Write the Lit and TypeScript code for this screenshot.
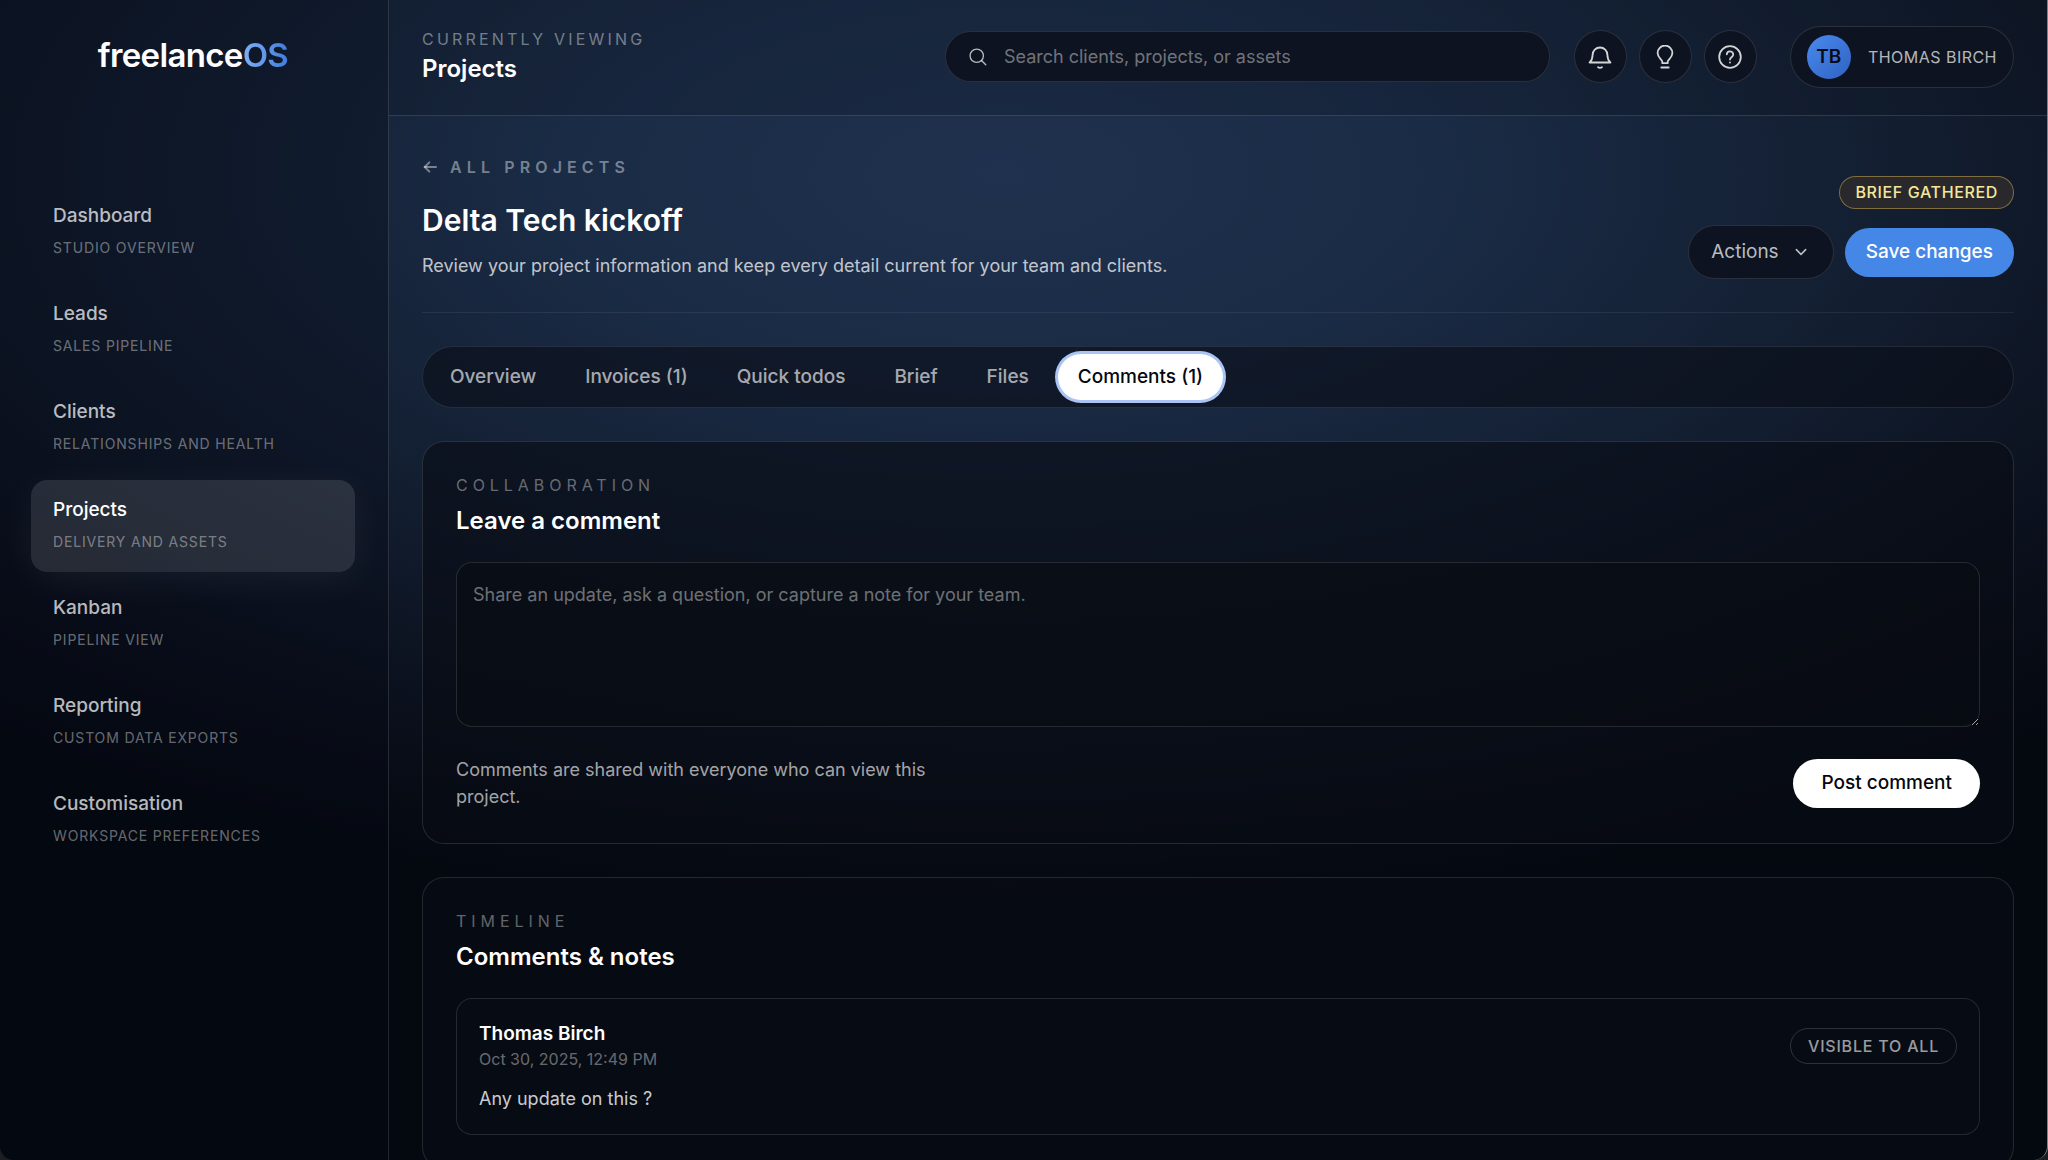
import { LitElement, html, css, svg, nothing } from "lit";
import { customElement, state } from "lit/decorators.js";
import { classMap } from "lit/directives/class-map.js";

interface NavItem {
  label: string;
  hint: string;
}

const NAV: NavItem[] = [
  { label: "Dashboard", hint: "Studio overview" },
  { label: "Leads", hint: "Sales pipeline" },
  { label: "Clients", hint: "Relationships and health" },
  { label: "Projects", hint: "Delivery and assets" },
  { label: "Kanban", hint: "Pipeline view" },
  { label: "Reporting", hint: "Custom data exports" },
  { label: "Customisation", hint: "Workspace preferences" },
];

const TABS = ["Overview", "Invoices (1)", "Quick todos", "Brief", "Files", "Comments (1)"];

const icon = (size: number, width: number, body: unknown) => html`<svg
  width=${size}
  height=${size}
  viewBox="0 0 24 24"
  fill="none"
  stroke="currentColor"
  stroke-width=${width}
  stroke-linecap="round"
  stroke-linejoin="round"
  aria-hidden="true"
>
  ${body}
</svg>`;

const ICONS = {
  search: svg`<circle cx="10.500" cy="10.500" r="8"/><path d="m16.500 16.500 4.800 4.800"/>`,
  bell: svg`<path d="M1.600 17.500c1.900-1.900 3-4 3-7.600a7.400 7.400 0 0 1 14.800 0c0 3.600 1.100 5.700 3 7.600z"/><path d="M10 22.200c.9.9 3.100.9 4 0"/>`,
  bulb: svg`<path d="M9.300 18.200v-1.500c0-2.200-4.700-3.900-4.700-8.700a7.400 7.400 0 0 1 14.800 0c0 4.800-4.700 6.500-4.700 8.700v1.500z"/><path d="M8.300 22.500h7.400"/>`,
  help: svg`<circle cx="12" cy="12" r="10.800"/><path d="M8.800 9.300a3.200 3.200 0 0 1 6.400.4c0 2.300-3.200 2.700-3.200 4.700"/><path d="M12 17.400v.1"/>`,
  arrow: svg`<path d="M21 12H4"/><path d="m11 5-7 7 7 7"/>`,
  chevron: svg`<path d="m5 8.500 7 7 7-7"/>`,
};

@customElement("app-root")
export class AppRoot extends LitElement {
  @state() private section = "Projects";
  @state() private tab = "Comments (1)";

  static styles = css`
    :host {
      display: block;
      background: #1c1e22;
      color: #fff;
      font-family: Inter, "Liberation Sans", sans-serif;
      font-size: 18px;
      line-height: 26px;
    }
    *,
    *::before,
    *::after {
      box-sizing: border-box;
    }
    h1,
    h2,
    p {
      margin: 0;
    }
    a {
      color: inherit;
      text-decoration: none;
    }
    button,
    input,
    textarea {
      font: inherit;
      color: inherit;
    }
    button {
      border: 0;
      cursor: pointer;
    }
    svg {
      display: block;
      flex: none;
    }
    .shell {
      display: flex;
      height: 100vh;
      overflow: hidden;
      border-right: 1px solid #7d8288;
      border-radius: 0 0 14px 14px;
      background:
        radial-gradient(
          78% 64% at 49% 15%,
          rgb(31, 49, 78),
          rgb(26, 43, 69) 28%,
          rgb(18, 29, 47) 58%,
          rgb(10, 15, 27) 82%,
          rgb(4, 8, 15)
        );
    }
    .sidebar {
      display: flex;
      flex-direction: column;
      flex: none;
      width: 389px;
      padding: 33px 33px 32px 31px;
      border-right: 1px solid rgba(255, 255, 255, 0.13);
      background: rgba(6, 8, 20, 0.34);
    }
    .logo {
      align-self: center;
      font-size: 33px;
      line-height: 44px;
      font-weight: 600;
      letter-spacing: -0.02em;
    }
    .logo-mark {
      background: linear-gradient(90deg, #7fb0f5, #3f7de0);
      background-clip: text;
      -webkit-background-clip: text;
      color: transparent;
    }
    .nav {
      display: flex;
      flex-direction: column;
      gap: 6px;
      margin-top: 109px;
    }
    .nav-item {
      display: flex;
      flex-direction: column;
      gap: 8px;
      height: 92px;
      padding: 17px 22px;
      border-radius: 16px;
      color: rgba(255, 255, 255, 0.72);
    }
    .nav-label {
      font-size: 19px;
      line-height: 26px;
      font-weight: 500;
    }
    .nav-hint {
      font-size: 14px;
      line-height: 22px;
      letter-spacing: 0.06em;
      text-transform: uppercase;
      color: rgba(255, 255, 255, 0.4);
    }
    .nav-item.active {
      background: rgba(255, 255, 255, 0.12);
      box-shadow: 0 8px 40px rgba(255, 255, 255, 0.06);
      color: #fff;
    }
    .main {
      display: flex;
      flex-direction: column;
      flex: 1;
      min-width: 0;
    }
    .topbar {
      display: flex;
      align-items: center;
      flex: none;
      height: 116px;
      padding: 0 33px 2px;
      border-bottom: 1px solid rgba(255, 255, 255, 0.13);
      background: rgba(8, 14, 24, 0.2);
    }
    .eyebrow {
      font-size: 16px;
      line-height: 24px;
      letter-spacing: 0.2em;
      text-transform: uppercase;
      color: rgba(255, 255, 255, 0.42);
    }
    .crumb-title {
      margin-top: 1px;
      font-size: 24px;
      line-height: 34px;
      font-weight: 600;
    }
    .pill {
      border: 1px solid rgba(255, 255, 255, 0.12);
      border-radius: 999px;
      background: #0d1320;
    }
    .search {
      display: flex;
      align-items: center;
      gap: 16px;
      width: 38%;
      height: 51px;
      margin-left: auto;
      padding: 0 22px;
      color: rgba(255, 255, 255, 0.7);
    }
    .search-input {
      flex: 1;
      min-width: 0;
      padding: 0;
      border: 0;
      outline: 0;
      background: none;
    }
    .search-input::placeholder,
    .note-input::placeholder {
      color: rgba(255, 255, 255, 0.42);
      opacity: 1;
    }
    .tools {
      display: flex;
      gap: 12px;
      margin: 0 33px 0 24px;
    }
    .tool {
      display: grid;
      place-items: center;
      width: 53px;
      height: 53px;
      padding: 0;
      color: rgba(255, 255, 255, 0.82);
    }
    .user {
      display: flex;
      align-items: center;
      gap: 17px;
      height: 62px;
      padding: 0 16px;
      font-size: 16px;
      letter-spacing: 0.03em;
      text-transform: uppercase;
      color: rgba(255, 255, 255, 0.7);
    }
    .avatar {
      display: grid;
      place-items: center;
      width: 44px;
      height: 44px;
      border-radius: 50%;
      background: linear-gradient(135deg, #4a8af0, #2f62c0);
      color: #060c18;
      font-size: 19px;
      font-weight: 600;
      letter-spacing: 0;
    }
    .content {
      display: flex;
      flex-direction: column;
      padding: 38px 33px 0;
    }
    .page-head {
      display: flex;
      align-items: flex-end;
      justify-content: space-between;
      padding-bottom: 33px;
      border-bottom: 1px solid rgba(255, 255, 255, 0.07);
    }
    .back {
      display: inline-flex;
      align-items: center;
      gap: 12px;
      font-size: 16px;
      line-height: 26px;
      font-weight: 600;
      letter-spacing: 0.32em;
      text-transform: uppercase;
      color: rgba(255, 255, 255, 0.42);
    }
    .title {
      margin-top: 18px;
      font-size: 30px;
      line-height: 40px;
      font-weight: 600;
    }
    .subtitle {
      margin-top: 13px;
      color: rgba(255, 255, 255, 0.74);
    }
    .head-side {
      display: flex;
      flex-direction: column;
      align-items: flex-end;
      gap: 16px;
    }
    .status {
      padding: 3px 15px;
      border: 1px solid rgba(216, 180, 84, 0.5);
      border-radius: 999px;
      background: #29292d;
      color: #f4e79a;
      font-size: 16px;
      line-height: 25px;
      font-weight: 500;
      letter-spacing: 0.04em;
      text-transform: uppercase;
    }
    .actions {
      display: flex;
      align-items: center;
      gap: 11px;
    }
    .menu {
      display: flex;
      align-items: center;
      gap: 14px;
      height: 54px;
      padding: 0 24px 0 22px;
      font-size: 19px;
      color: rgba(255, 255, 255, 0.72);
    }
    .save,
    .post {
      height: 49px;
      border-radius: 999px;
      font-size: 19px;
      font-weight: 500;
    }
    .save {
      padding: 0 21px;
      background: #4587e6;
      color: #fff;
    }
    .post {
      padding: 0 28px;
      background: #fff;
      color: #04070f;
    }
    .tabs {
      display: flex;
      gap: 9px;
      margin-top: 33px;
      padding: 7px;
      border: 1px solid rgba(255, 255, 255, 0.1);
      border-radius: 999px;
      background: rgba(10, 13, 24, 0.6);
    }
    .tab {
      height: 46px;
      padding: 0 20px;
      border-radius: 999px;
      background: none;
      font-size: 19px;
      font-weight: 500;
      color: rgba(255, 255, 255, 0.65);
    }
    .tab.active {
      background: #fff;
      box-shadow: 0 0 0 3px #aac4f3;
      color: #04070f;
    }
    .card {
      margin-top: 33px;
      padding: 31px 33px 33px;
      border: 1px solid rgba(255, 255, 255, 0.12);
      border-radius: 22px;
      background: rgba(8, 11, 20, 0.6);
    }
    .card .eyebrow {
      letter-spacing: 0.31em;
      color: rgba(255, 255, 255, 0.38);
    }
    .card-title {
      margin-top: 7px;
      font-size: 24px;
      line-height: 34px;
      font-weight: 600;
    }
    .note-input {
      display: block;
      width: 100%;
      height: 165px;
      margin-top: 24px;
      padding: 19px 16px;
      border: 1px solid rgba(255, 255, 255, 0.12);
      border-radius: 16px;
      outline: 0;
      background: rgba(8, 12, 19, 0.6);
      resize: vertical;
      color-scheme: dark;
    }
    .form-foot {
      display: flex;
      align-items: center;
      justify-content: space-between;
      margin-top: 29px;
    }
    .form-note {
      max-width: 500px;
      line-height: 27px;
      color: rgba(255, 255, 255, 0.64);
    }
    .comment {
      margin-top: 24px;
      padding: 22px;
      border: 1px solid rgba(255, 255, 255, 0.12);
      border-radius: 16px;
      background: rgba(8, 12, 20, 0.6);
    }
    .comment-head {
      display: flex;
      align-items: center;
      justify-content: space-between;
    }
    .author {
      font-size: 19px;
      font-weight: 600;
    }
    .date {
      font-size: 16px;
      line-height: 24px;
      color: rgba(255, 255, 255, 0.4);
    }
    .comment-body {
      margin-top: 15px;
      color: rgba(255, 255, 255, 0.8);
    }
    .visibility {
      padding: 4px 17px;
      border: 1px solid rgba(255, 255, 255, 0.16);
      border-radius: 999px;
      font-size: 16px;
      font-weight: 500;
      letter-spacing: 0.05em;
      text-transform: uppercase;
      color: rgba(255, 255, 255, 0.6);
    }
  `;

  private renderSidebar() {
    return html`<aside class="sidebar">
      <a class="logo" href="#home">freelance<span class="logo-mark">OS</span></a>
      <nav class="nav" aria-label="Main">
        ${NAV.map(
          (item) => html`<a
            class=${classMap({ "nav-item": true, active: item.label === this.section })}
            href="#${item.label.toLowerCase()}"
            aria-current=${item.label === this.section ? "page" : nothing}
            @click=${() => (this.section = item.label)}
          >
            <span class="nav-label">${item.label}</span>
            <span class="nav-hint">${item.hint}</span>
          </a>`,
        )}
      </nav>
    </aside>`;
  }

  private renderTopbar() {
    return html`<header class="topbar">
      <div>
        <p class="eyebrow">Currently viewing</p>
        <p class="crumb-title">${this.section}</p>
      </div>
      <label class="search pill">
        ${icon(20, 1.6, ICONS.search)}
        <input
          class="search-input"
          type="search"
          aria-label="Search"
          placeholder="Search clients, projects, or assets"
        />
      </label>
      <div class="tools">
        <button class="tool pill" aria-label="Notifications">${icon(24, 1.8, ICONS.bell)}</button>
        <button class="tool pill" aria-label="Tips">${icon(24, 1.8, ICONS.bulb)}</button>
        <button class="tool pill" aria-label="Help">${icon(24, 1.8, ICONS.help)}</button>
      </div>
      <button class="user pill"><span class="avatar">TB</span><span>Thomas Birch</span></button>
    </header>`;
  }

  private renderPageHead() {
    return html`<div class="page-head">
      <div>
        <a class="back" href="#projects">${icon(16, 3, ICONS.arrow)}<span>All projects</span></a>
        <h1 class="title">Delta Tech kickoff</h1>
        <p class="subtitle">
          Review your project information and keep every detail current for your team and clients.
        </p>
      </div>
      <div class="head-side">
        <span class="status">Brief gathered</span>
        <div class="actions">
          <button class="menu pill" aria-haspopup="menu">
            <span>Actions</span>${icon(16, 2.4, ICONS.chevron)}
          </button>
          <button class="save">Save changes</button>
        </div>
      </div>
    </div>`;
  }

  render() {
    return html`<div class="shell">
      ${this.renderSidebar()}
      <div class="main">
        ${this.renderTopbar()}
        <main class="content">
          ${this.renderPageHead()}
          <div class="tabs" role="tablist">
            ${TABS.map(
              (name) => html`<button
                role="tab"
                class=${classMap({ tab: true, active: name === this.tab })}
                aria-selected=${name === this.tab ? "true" : "false"}
                @click=${() => (this.tab = name)}
              >
                ${name}
              </button>`,
            )}
          </div>
          <section class="card">
            <p class="eyebrow">Collaboration</p>
            <h2 class="card-title"><label for="note">Leave a comment</label></h2>
            <textarea
              class="note-input"
              id="note"
              placeholder="Share an update, ask a question, or capture a note for your team."
            ></textarea>
            <div class="form-foot">
              <p class="form-note">Comments are shared with everyone who can view this project.</p>
              <button class="post">Post comment</button>
            </div>
          </section>
          <section class="card">
            <p class="eyebrow">Timeline</p>
            <h2 class="card-title">Comments &amp; notes</h2>
            <article class="comment">
              <div class="comment-head">
                <div>
                  <p class="author">Thomas Birch</p>
                  <p class="date">Oct 30, 2025, 12:49 PM</p>
                </div>
                <span class="visibility">Visible to all</span>
              </div>
              <p class="comment-body">Any update on this ?</p>
            </article>
          </section>
        </main>
      </div>
    </div>`;
  }
}
